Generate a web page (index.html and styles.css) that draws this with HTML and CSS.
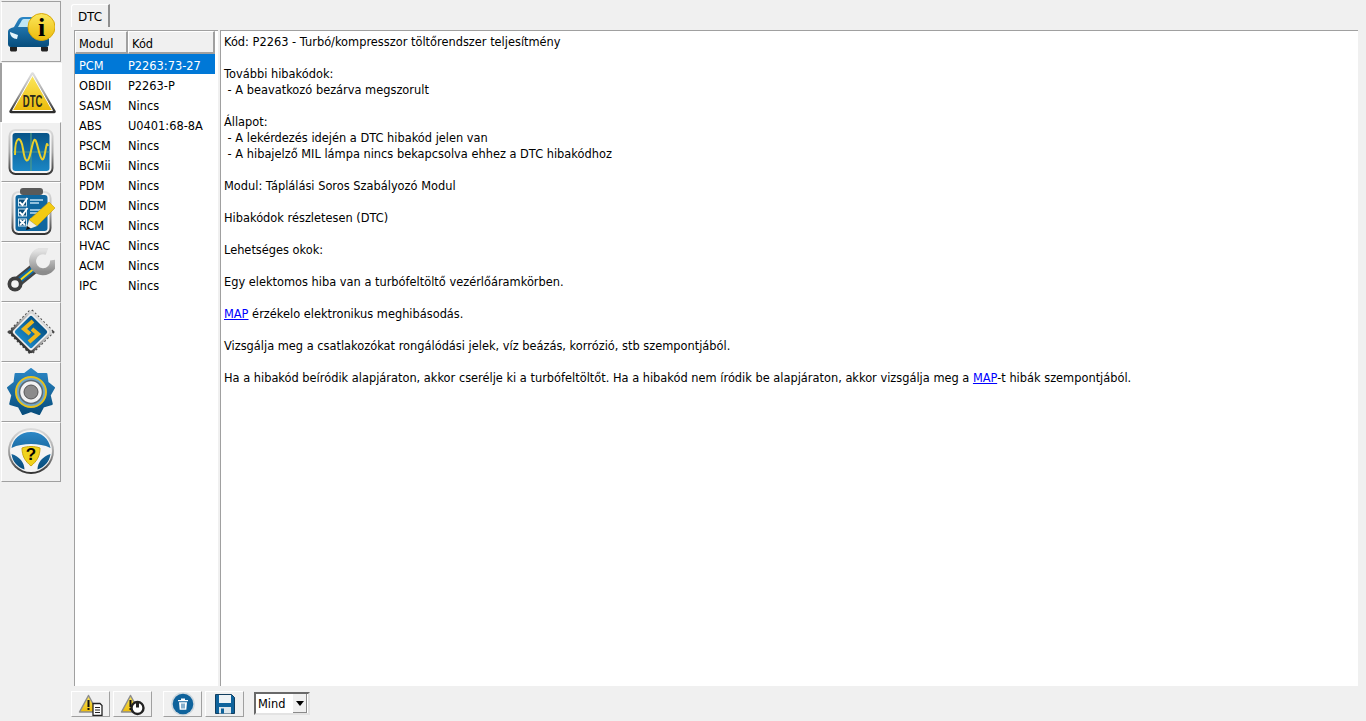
FILE: index.html
```html
<!DOCTYPE html>
<html lang="hu">

<head>
    <meta charset="UTF-8">
    <title>DTC</title>
    <link rel="stylesheet" href="styles.css">
</head>

<body>
    <svg class="defs" width="0" height="0">
        <defs>
            <linearGradient id="blue" x1="0" y1="0" x2="0" y2="1">
                <stop offset="0" stop-color="#2c87c6" />
                <stop offset="1" stop-color="#074d7c" />
            </linearGradient>
            <linearGradient id="bluedown" x1="0" y1="0" x2="0" y2="1">
                <stop offset="0" stop-color="#075488" />
                <stop offset="1" stop-color="#1b86c4" />
            </linearGradient>
            <linearGradient id="yellow" x1="0" y1="0" x2="0" y2="1">
                <stop offset="0" stop-color="#fbe75c" />
                <stop offset="1" stop-color="#ecbb0b" />
            </linearGradient>
            <linearGradient id="steel" x1="0" y1="0" x2="0" y2="1">
                <stop offset="0" stop-color="#dedede" />
                <stop offset=".5" stop-color="#a8a8a8" />
                <stop offset="1" stop-color="#2e2e2e" />
            </linearGradient>
            <linearGradient id="chrome" x1="0" y1="0" x2="0" y2="1">
                <stop offset="0" stop-color="#e2e2e2" />
                <stop offset="1" stop-color="#8c8c8c" />
            </linearGradient>
        </defs>
    </svg>

    <aside class="sidebar">
        <button class="side-btn">
            <svg viewBox="0 0 48 48" class="side-icon">
                <path d="M1 24c0-3 3-4 6-5l4-7c1-2 3-3 5-3h11c3 0 5 1 6 3l4 7c3 1 5 2 5 5v12c0 2-1 3-3 3H4c-2 0-3-1-3-3z" fill="url(#blue)" />
                <path d="M11 19l4-7c1-1 1-1 3-1h9c2 0 3 0 4 2l3 6z" fill="#bfe6f4" />
                <path d="M3 24l8 3-1 4c-4 0-7-3-7-7z" fill="#e4f4fb" />
                <path d="M3 39h7v3c0 1-1 1.500-2 1.500H5c-1 0-2-.500-2-1.500zM34 39h7v3c0 1-1 1.500-2 1.500h-3c-1 0-2-.500-2-1.500z" fill="#222" />
                <circle cx="34.500" cy="19" r="13.500" fill="url(#yellow)" stroke="#d9a908" />
                <text x="34.500" y="28" class="icon-i">i</text>
            </svg>
        </button>
        <button class="side-btn active">
            <svg viewBox="0 0 48 48" class="side-icon">
                <path d="M24.500 5L46 42.500H3z" fill="url(#steel)" stroke="url(#steel)" stroke-width="3.500" stroke-linejoin="round" />
                <path d="M24.500 6.500L44.500 41.500H4.500z" fill="url(#yellow)" stroke="#fff" stroke-width="1" stroke-linejoin="round" />
                <text x="41" y="38" class="icon-dtc" transform="scale(.6 1)">DTC</text>
            </svg>
        </button>
        <button class="side-btn">
            <svg viewBox="0 0 48 48" class="side-icon">
                <rect x="1.500" y="1" width="45" height="46" rx="7" fill="url(#steel)" />
                <rect x="3.500" y="3" width="41" height="42" rx="5" fill="#f4f4f4" />
                <rect x="5.500" y="5" width="37" height="38" rx="3" fill="url(#bluedown)" />
                <path d="M24 5v38M5.500 24h37" stroke="#4f9a86" stroke-width="1.200" />
                <path d="M8 27C8 7 14 7 16 21S21 37 24 23S28 8 31 20S36 36 38 25S40 15 41 18" fill="none" stroke="#e9cf2c" stroke-width="2" />
            </svg>
        </button>
        <button class="side-btn">
            <svg viewBox="0 0 48 48" class="side-icon">
                <rect x="4.500" y="3" width="40" height="44" rx="7" fill="url(#steel)" />
                <rect x="6.500" y="5" width="36" height="40" rx="5" fill="#f2f2f2" />
                <rect x="8.500" y="7" width="32" height="36" rx="3" fill="#10679f" />
                <rect x="13" y="0" width="23" height="7" rx="3" fill="#5a5a5a" />
                <path d="M23 12h13M23 15h9M23 22h13M23 25h9M23 31h6" stroke="#bfe0f2" stroke-width="1.300" />
                <rect x="11.500" y="11" width="8" height="7" fill="#0b4c78" stroke="#cfe6f2" />
                <rect x="11.500" y="21" width="8" height="7" fill="#0b4c78" stroke="#cfe6f2" />
                <rect x="11.500" y="31" width="8" height="7" fill="#0b4c78" stroke="#cfe6f2" />
                <path d="M12.500 14l3 3 5-7M12.500 24l3 3 5-7M13 32l5 5M18 32l-5 5" fill="none" stroke="#fff" stroke-width="1.800" />
                <path d="M42 14l6 6-18 18-8-6z" fill="#f3cb12" stroke="#c79a06" stroke-width=".6" />
                <path d="M22 32l8 6-8 3-2.500-.500z" fill="#f1efe6" />
                <path d="M20 38l-1 4 5-1.500z" fill="#111" />
            </svg>
        </button>
        <button class="side-btn">
            <svg viewBox="0 0 48 48" class="side-icon">
                <path d="M8 36L29 19" stroke="#444" stroke-width="10" />
                <path d="M9 35L30 18" stroke="#0f6ba8" stroke-width="6" />
                <path d="M12 33L29 19" stroke="#f4d81a" stroke-width="2" />
                <path d="M40 3.500A10.500 10.500 0 1 0 46.500 12" fill="none" stroke="url(#chrome)" stroke-width="7" />
                <circle cx="8" cy="36" r="7.500" fill="#3f3f3f" />
                <circle cx="8" cy="36" r="3.800" fill="#f4f4f4" />
            </svg>
        </button>
        <button class="side-btn">
            <svg viewBox="0 0 48 48" class="side-icon">
                <path d="M24 3L45 24 24 45 3 24z" fill="none" stroke="#4a4a4a" stroke-width="4" stroke-dasharray="2 2" />
                <rect x="8" y="8" width="32" height="32" rx="4" transform="rotate(45 24 24)" fill="url(#steel)" />
                <rect x="10.500" y="10.500" width="27" height="27" rx="2" transform="rotate(45 24 24)" fill="#f0f0f0" />
                <rect x="12" y="12" width="24" height="24" rx="2" transform="rotate(45 24 24)" fill="url(#bluedown)" />
                <path d="M26 13l-9 8 6 5M22 34l9-8-6-5" fill="none" stroke="#efb71c" stroke-width="4" />
            </svg>
        </button>
        <button class="side-btn">
            <svg viewBox="0 0 48 48" class="side-icon">
                <polygon points="24,1 30.500,6.100 39.400,6 40.500,14.500 47,19.800 42.700,27.300 44.800,36 36.200,38.600 32.200,46 24,43 15.800,46 11.800,38.600 3.200,36 5.300,27.300 1,19.800 7.500,14.500 8.600,6 17.500,6.100" fill="url(#blue)" stroke="url(#blue)" stroke-width="2" stroke-linejoin="round" />
                <circle cx="24" cy="24" r="15" fill="#6ea7cb" stroke="#e6c11e" stroke-width="2" />
                <circle cx="24" cy="24" r="11.500" fill="#f2f2f2" stroke="#5b6a75" stroke-width="1.500" />
                <circle cx="24" cy="24" r="7" fill="#8b8b8b" stroke="#555" />
            </svg>
        </button>
        <button class="side-btn">
            <svg viewBox="0 0 48 48" class="side-icon icon-up">
                <circle cx="24" cy="24" r="23" fill="url(#steel)" />
                <circle cx="24" cy="24" r="21" fill="#f4f4f4" />
                <path d="M24 5C13 5 6 12 4.500 21c6-3 12.500-4 19.500-4s13.500 1 19.500 4C42 12 35 5 24 5zM4.500 27c1 8 6 13 13 15.500 0-7-5-13-13-15.500zM43.500 27c-1 8-6 13-13 15.500 0-7 5-13 13-15.500z" fill="url(#blue)" />
                <path d="M15 21c5-2 13-2 18 0 0 8-3 13-9 18-6-5-9-10-9-18z" fill="#f0d21c" stroke="#caa70e" />
                <text x="24" y="33" class="icon-help">?</text>
            </svg>
        </button>
    </aside>

    <main class="main">
        <div class="tabs">
            <div class="tab">DTC</div>
        </div>

        <div class="panes">
            <div class="dtc-list">
                <div class="list-head">
                    <div class="head-cell col-module">Modul</div>
                    <div class="head-cell col-code">Kód</div>
                </div>
                <div class="row selected"><span class="col-module">PCM</span><span>P2263:73-27</span></div>
                <div class="row"><span class="col-module">OBDII</span><span>P2263-P</span></div>
                <div class="row"><span class="col-module">SASM</span><span>Nincs</span></div>
                <div class="row"><span class="col-module">ABS</span><span>U0401:68-8A</span></div>
                <div class="row"><span class="col-module">PSCM</span><span>Nincs</span></div>
                <div class="row"><span class="col-module">BCMii</span><span>Nincs</span></div>
                <div class="row"><span class="col-module">PDM</span><span>Nincs</span></div>
                <div class="row"><span class="col-module">DDM</span><span>Nincs</span></div>
                <div class="row"><span class="col-module">RCM</span><span>Nincs</span></div>
                <div class="row"><span class="col-module">HVAC</span><span>Nincs</span></div>
                <div class="row"><span class="col-module">ACM</span><span>Nincs</span></div>
                <div class="row"><span class="col-module">IPC</span><span>Nincs</span></div>
            </div>

            <div class="details">
                <p>Kód: P2263 - Turbó/kompresszor töltőrendszer teljesítmény</p>
                <p>További hibakódok:<br>&nbsp;- A beavatkozó bezárva megszorult</p>
                <p>Állapot:<br>&nbsp;- A lekérdezés idején a DTC hibakód jelen van<br>&nbsp;- A hibajelző MIL lámpa nincs bekapcsolva ehhez a DTC hibakódhoz</p>
                <p>Modul: Táplálási Soros Szabályozó Modul</p>
                <p>Hibakódok részletesen (DTC)</p>
                <p>Lehetséges okok:</p>
                <p>Egy elektomos hiba van a turbófeltöltő vezérlőáramkörben.</p>
                <p><a href="#">MAP</a> érzékelo elektronikus meghibásodás.</p>
                <p>Vizsgálja meg a csatlakozókat rongálódási jelek, víz beázás, korrózió, stb szempontjából.</p>
                <p>Ha a hibakód beíródik alapjáraton, akkor cserélje ki a turbófeltöltőt. Ha a hibakód nem íródik be alapjáraton, akkor vizsgálja meg a <a href="#">MAP</a>-t hibák szempontjából.</p>
            </div>
        </div>

        <div class="toolbar">
            <button class="tool-btn">
                <svg viewBox="0 0 26 24" class="tool-icon">
                    <path d="M10.500 3.500l9 16.500H1.500z" fill="url(#yellow)" stroke="#8d8d8d" stroke-width="1.500" stroke-linejoin="round" />
                    <rect x="9.500" y="8" width="2" height="7" fill="#111" /><rect x="9.500" y="16" width="2" height="2" fill="#111" />
                    <path d="M15 11.500h7l2 2v10h-9z" fill="#fff" stroke="#222" stroke-width="1.300" />
                    <path d="M17 15.500h5M17 18h5M17 20.500h5" stroke="#222" />
                </svg>
            </button>
            <button class="tool-btn">
                <svg viewBox="0 0 26 24" class="tool-icon">
                    <path d="M10.500 3.500l9 16.500H1.500z" fill="url(#yellow)" stroke="#8d8d8d" stroke-width="1.500" stroke-linejoin="round" />
                    <rect x="9.500" y="8" width="2" height="7" fill="#111" /><rect x="9.500" y="16" width="2" height="2" fill="#111" />
                    <circle cx="17.500" cy="16" r="6" fill="#fff" stroke="#222" stroke-width="2.400" />
                    <path d="M17.500 10.500v5" stroke="#222" stroke-width="3" />
                </svg>
            </button>
            <button class="tool-btn group-start">
                <svg viewBox="0 0 24 24" class="tool-icon square">
                    <circle cx="12" cy="12" r="11.800" fill="#cfd8de" />
                    <circle cx="12" cy="12" r="10.300" fill="#0f639c" />
                    <path d="M7 8h10v1.200H7zM10 6.500h4V8h-4zM8 10.200h8l-.7 7.500H8.700z" fill="#fff" />
                    <path d="M11 11.500v5M13 11.500v5" stroke="#0f639c" />
                </svg>
            </button>
            <button class="tool-btn">
                <svg viewBox="0 0 24 24" class="tool-icon square">
                    <path d="M2.500 2.500h16l3 3v16h-19z" fill="#0f639c" stroke="#123f60" />
                    <rect x="6" y="3" width="12" height="8" fill="#eef3f6" />
                    <rect x="6" y="15" width="12" height="6.500" fill="#dfe7ec" />
                    <rect x="8" y="16.500" width="3" height="5" fill="#0f639c" />
                </svg>
            </button>
            <div class="combo">
                <span class="combo-value">Mind</span>
                <span class="combo-arrow"></span>
            </div>
        </div>
    </main>
</body>

</html>
```

FILE: styles.css
```css
html,
body {
    height: 100%;
}

body {
    margin: 0;
    display: flex;
    overflow: hidden;
    background-color: #f0f0f0;
    color: #000;
    font-family: "DejaVu Sans", sans-serif;
    font-size: 11.400px;
}

.defs {
    position: absolute;
}

/* sidebar */
.sidebar {
    width: 61px;
    padding-top: 1px;
    margin-right: 10px;
    flex-shrink: 0;
}

.side-btn {
    display: flex;
    align-items: center;
    justify-content: center;
    width: 60px;
    height: 60px;
    margin-left: 1px;
    padding: 0;
    background-color: #f0f0f0;
    border: 0;
    border-left: 1px solid #fff;
    border-top: 1px solid #fff;
    border-right: 1px solid #a0a0a0;
    border-bottom: 1px solid #a0a0a0;
}

.side-btn:first-child {
    height: 61px;
    border-top-color: #a0a0a0;
}

.side-btn.active {
    width: 62px;
    height: 59px;
    margin: 1px 0 0;
    padding-right: 1px;
    background-color: #fff;
    border-left: 2px solid #a0a0a0;
    border-top: 0;
    border-right: 0;
    border-bottom: 0;
}

.side-icon {
    width: 48px;
    height: 48px;
    flex-shrink: 0;
}

.icon-up {
    margin-top: -3px;
}

.icon-i {
    font-family: "Liberation Serif", serif;
    font-weight: bold;
    font-size: 26px;
    text-anchor: middle;
}

.icon-help {
    font-family: "Liberation Sans", sans-serif;
    font-weight: bold;
    font-size: 17px;
    text-anchor: middle;
}

.icon-dtc {
    font-family: "Liberation Sans", sans-serif;
    font-weight: bold;
    font-size: 16px;
    text-anchor: middle;
    fill: #2a2a1a;
}

/* main */
.main {
    flex: 1;
    display: flex;
    flex-direction: column;
    padding-right: 8px;
    min-width: 0;
}

.tabs {
    display: flex;
    height: 30px;
    padding-top: 4px;
    box-sizing: border-box;
}

.tab {
    width: 39px;
    height: 23px;
    line-height: 25px;
    text-align: center;
    border-top: 1px solid #fff;
    border-left: 1px solid #fff;
    border-right: 2px solid #8f8f8f;
    border-top-left-radius: 3px;
    box-sizing: border-box;
    font-size: 12px;
}

.panes {
    flex: 1;
    display: flex;
    gap: 2px;
    min-height: 0;
    padding-left: 3px;
}

.dtc-list {
    width: 144px;
    padding-right: 3px;
    box-sizing: border-box;
    background-color: #fff;
    border-top: 1px solid #a0a0a0;
    border-left: 1px solid #a0a0a0;
    flex-shrink: 0;
}

.list-head {
    display: flex;
    height: 23px;
}

.head-cell {
    line-height: 24px;
    padding-left: 3px;
    box-sizing: border-box;
    background-color: #f0f0f0;
    border-top: 1px solid #fff;
    border-left: 1px solid #fff;
    border-right: 2px solid #a0a0a0;
    border-bottom: 2px solid #a0a0a0;
}

.head-cell.col-module {
    width: 53px;
    flex-shrink: 0;
}

.head-cell.col-code {
    flex: 1;
}

.row {
    display: flex;
    height: 20px;
    line-height: 24px;
    padding-left: 4px;
}

.row .col-module {
    width: 49px;
    flex-shrink: 0;
}

.row.selected {
    background-color: #0078d7;
    color: #fff;
}

.details {
    flex: 1;
    background-color: #fff;
    border-top: 1px solid #a0a0a0;
    border-left: 1px solid #a0a0a0;
    padding: 3px;
    line-height: 16px;
    min-width: 0;
}

.details p {
    margin: 0 0 16px;
}

.details a {
    color: #0000ff;
}

/* toolbar */
.toolbar {
    display: flex;
    align-items: flex-start;
    height: 35px;
    box-sizing: border-box;
    gap: 3px;
    padding-top: 5px;
    flex-shrink: 0;
}

.tool-btn {
    display: flex;
    align-items: center;
    justify-content: center;
    width: 39px;
    height: 26px;
    padding: 0;
    background-color: #f0f0f0;
    border: 0;
    border-left: 1px solid #fff;
    border-top: 1px solid #fff;
    border-right: 1px solid #a0a0a0;
    border-bottom: 1px solid #a0a0a0;
}

.tool-btn.group-start {
    margin-left: 8px;
}

.tool-icon {
    width: 26px;
    height: 24px;
    flex-shrink: 0;
}

.tool-icon.square {
    width: 24px;
}

.combo {
    display: flex;
    align-items: center;
    justify-content: space-between;
    width: 56px;
    height: 23px;
    margin: 1px 0 0 7px;
    padding-right: 1px;
    box-sizing: border-box;
    background-color: #fff;
    border: 2px solid;
    border-color: #696969 #e3e3e3 #e3e3e3 #696969;
}

.combo-value {
    padding-left: 2px;
}

.combo-arrow {
    display: flex;
    align-items: center;
    justify-content: center;
    width: 14px;
    height: 19px;
    background-color: #f0f0f0;
    border-right: 1px solid #8a8a8a;
    border-bottom: 1px solid #8a8a8a;
    box-sizing: border-box;
}

.combo-arrow::after {
    content: "";
    border-left: 4px solid transparent;
    border-right: 4px solid transparent;
    border-top: 5px solid #000;
}
```
